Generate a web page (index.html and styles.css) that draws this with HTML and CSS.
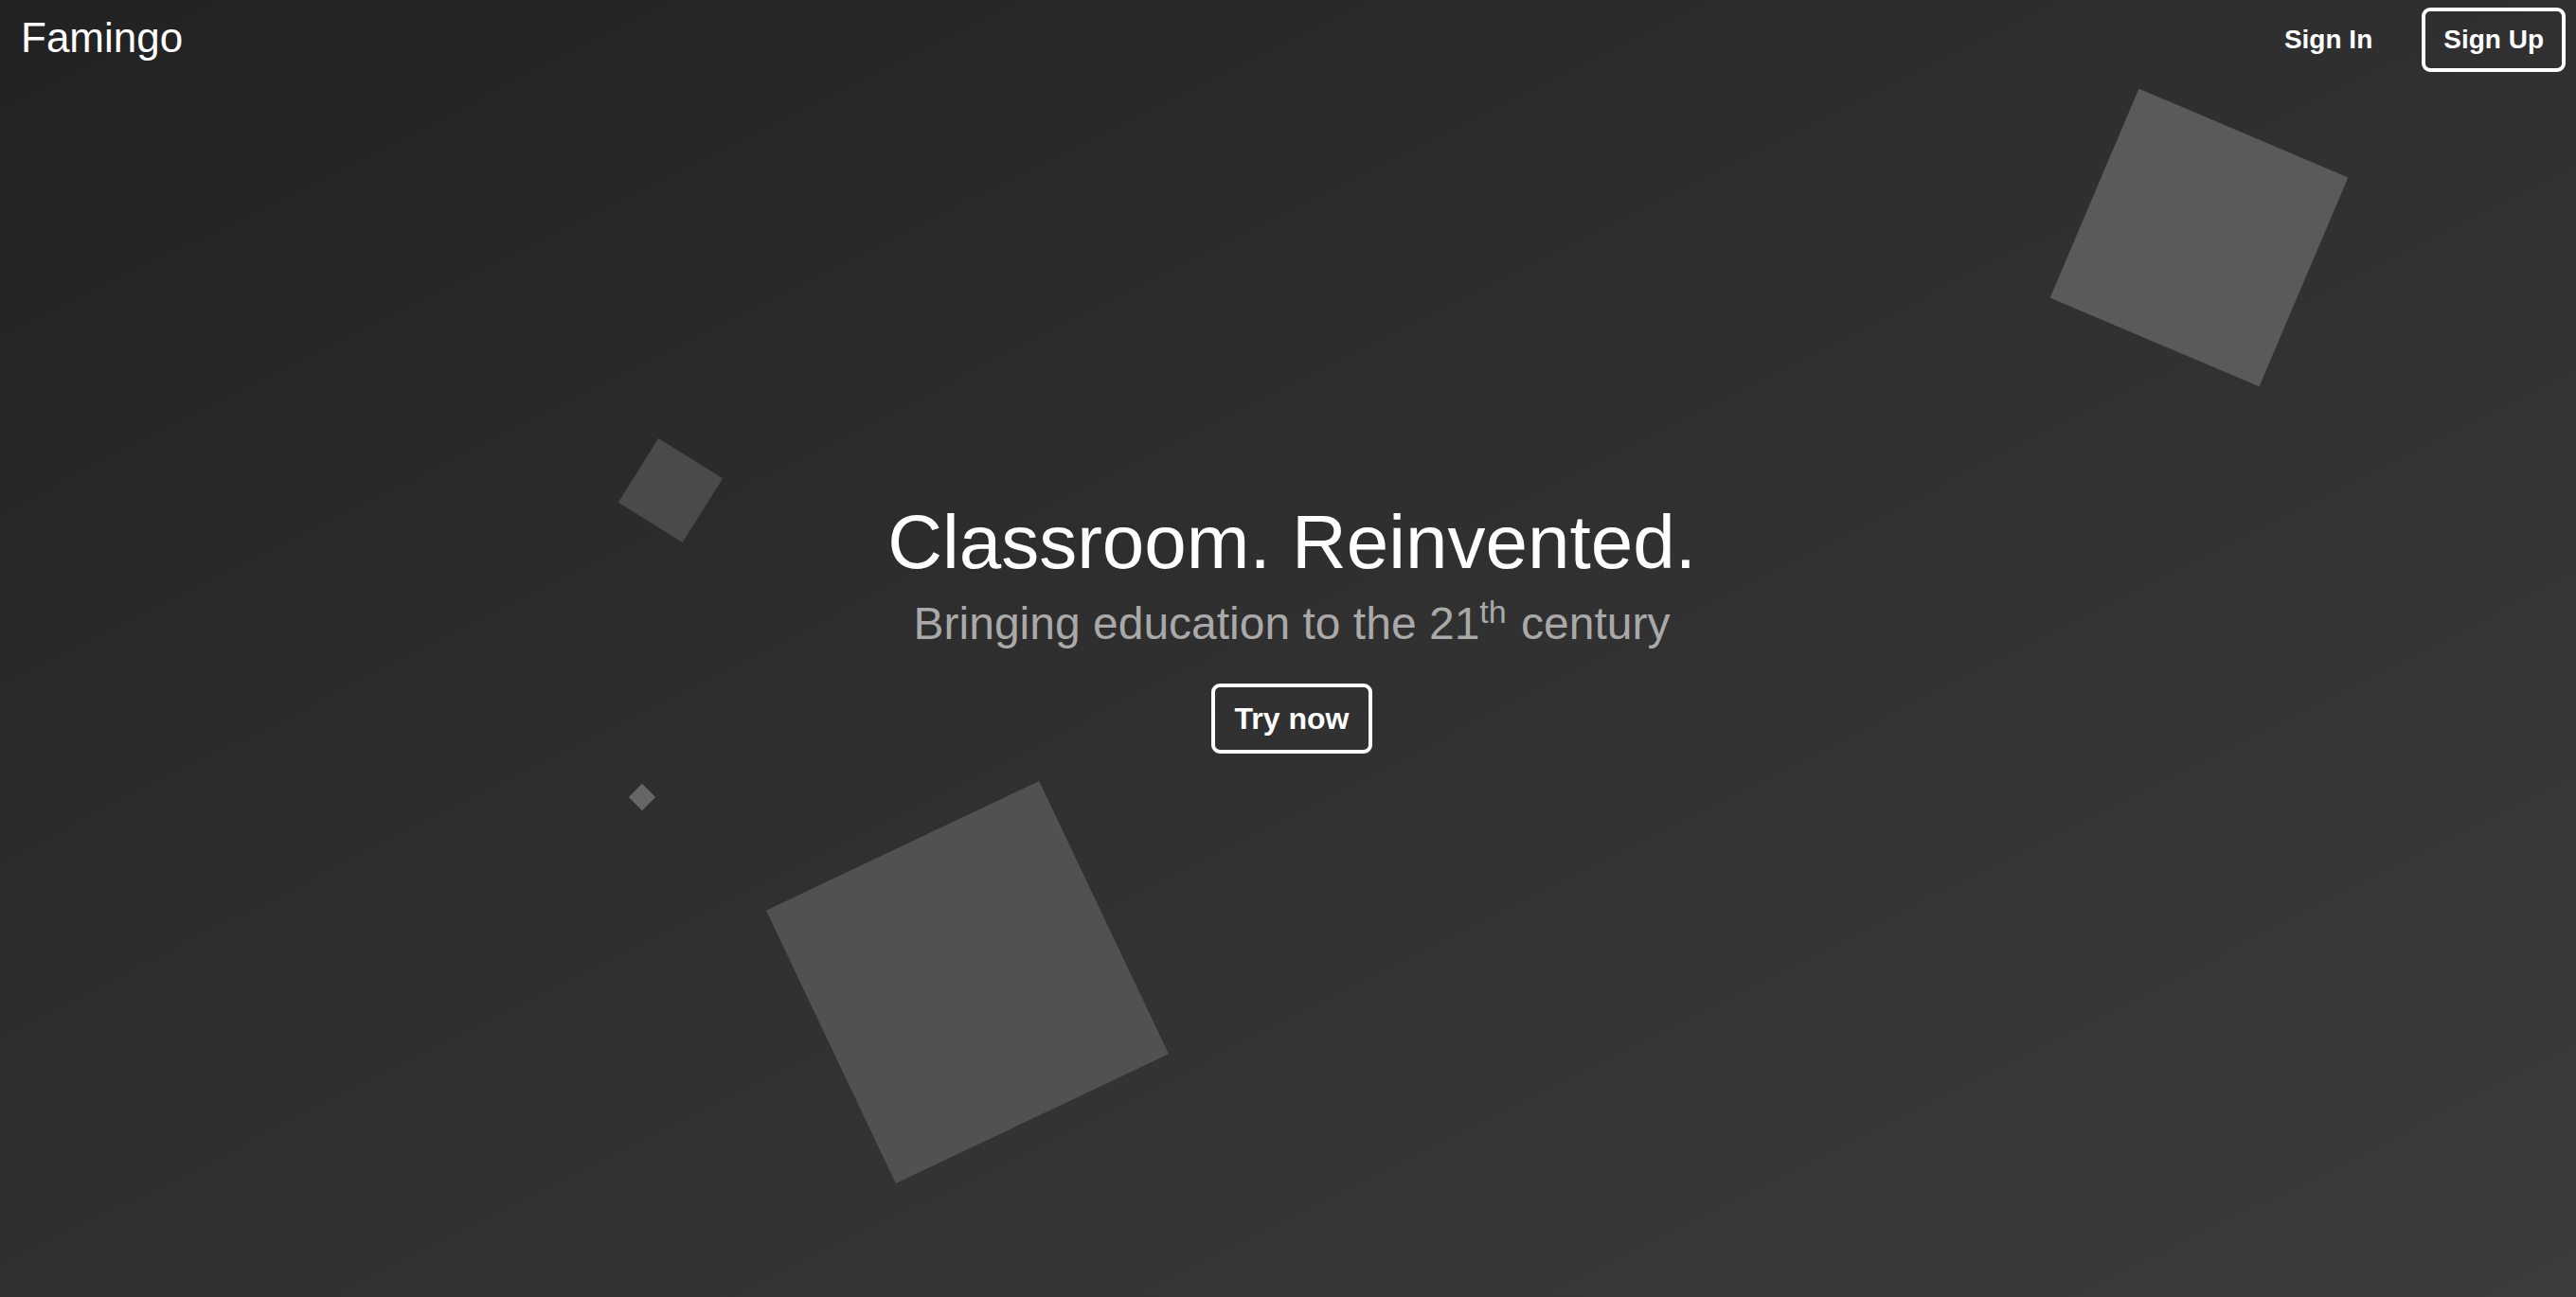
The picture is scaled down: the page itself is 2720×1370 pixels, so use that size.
FILE: index.html
```html
<!DOCTYPE html>
<html lang="en">
<head>
<meta charset="utf-8">
<title>Famingo</title>
<link rel="stylesheet" href="styles.css">
</head>
<body>
<div class="page">
  <div class="decor" aria-hidden="true">
    <div class="shape shape-a"></div>
    <div class="shape shape-b"></div>
    <div class="shape shape-c"></div>
    <div class="shape shape-d"></div>
  </div>
  <header class="topbar">
    <a class="logo" href="#">Famingo</a>
    <nav class="nav">
      <a class="nav-link" href="#">Sign In</a>
      <a class="nav-link nav-outline" href="#">Sign Up</a>
    </nav>
  </header>
  <main class="hero">
    <h1 class="hero-title">Classroom. Reinvented.</h1>
    <p class="hero-sub">Bringing education to the 21<sup>th</sup> century</p>
    <a class="btn-outline" href="#">Try now</a>
  </main>
</div>
</body>
</html>
```

FILE: styles.css
```css
html, body {
  margin: 0;
  padding: 0;
}

body {
  font-family: "Liberation Sans", Arial, Helvetica, sans-serif;
  color: #fff;
  background: #222;
}

a {
  color: inherit;
  text-decoration: none;
}

.page {
  position: relative;
  min-height: 100vh;
  display: flex;
  flex-direction: column;
  overflow: hidden;
  background: linear-gradient(to bottom right, #222222 0%, #303030 50%, #3c3c3c 100%);
}

.decor {
  position: absolute;
  inset: 0;
  z-index: 0;
  pointer-events: none;
}

.shape {
  position: absolute;
}

.shape-a {
  left: 2202px;
  top: 131px;
  width: 240px;
  height: 240px;
  background: #5a5a5a;
  transform: rotate(23deg);
}

.shape-b {
  left: 668px;
  top: 478px;
  width: 80px;
  height: 80px;
  background: #4a4a4a;
  transform: rotate(32deg);
}

.shape-c {
  left: 668px;
  top: 832px;
  width: 20px;
  height: 20px;
  background: #666666;
  transform: rotate(45deg);
}

.shape-d {
  left: 862px;
  top: 878px;
  width: 319px;
  height: 319px;
  background: #515151;
  transform: rotate(-25.4deg);
}

.topbar {
  position: relative;
  z-index: 1;
  display: flex;
  justify-content: space-between;
  align-items: flex-start;
  padding: 8px 11px 0 22px;
}

.logo {
  font-size: 44px;
  line-height: 50px;
  margin-top: 7px;
  font-weight: 400;
}

.nav {
  display: flex;
  align-items: flex-start;
  gap: 29px;
}

.nav-link {
  display: block;
  font-size: 28px;
  line-height: 32px;
  font-weight: 700;
  padding: 14px 19px;
  border: 4px solid transparent;
  border-radius: 9px;
}

.nav-outline {
  border-color: #fff;
}

.hero {
  position: relative;
  z-index: 1;
  flex: 1;
  display: flex;
  flex-direction: column;
  align-items: center;
  justify-content: center;
  padding: 0 0 118px 8px;
}

.hero-title {
  margin: 0;
  font-size: 80px;
  line-height: 80px;
  font-weight: 400;
  color: #fff;
}

.hero-sub {
  margin: 22px 0 0;
  font-size: 48px;
  line-height: 48px;
  color: #a9a9a9;
}

.hero-sub sup {
  font-size: 34px;
  line-height: 0;
  vertical-align: 17px;
  margin-right: 2px;
}

.btn-outline {
  margin-top: 39px;
  display: block;
  font-size: 32px;
  line-height: 36px;
  font-weight: 700;
  padding: 15px 21px;
  border: 4px solid #fff;
  border-radius: 9px;
}
```
